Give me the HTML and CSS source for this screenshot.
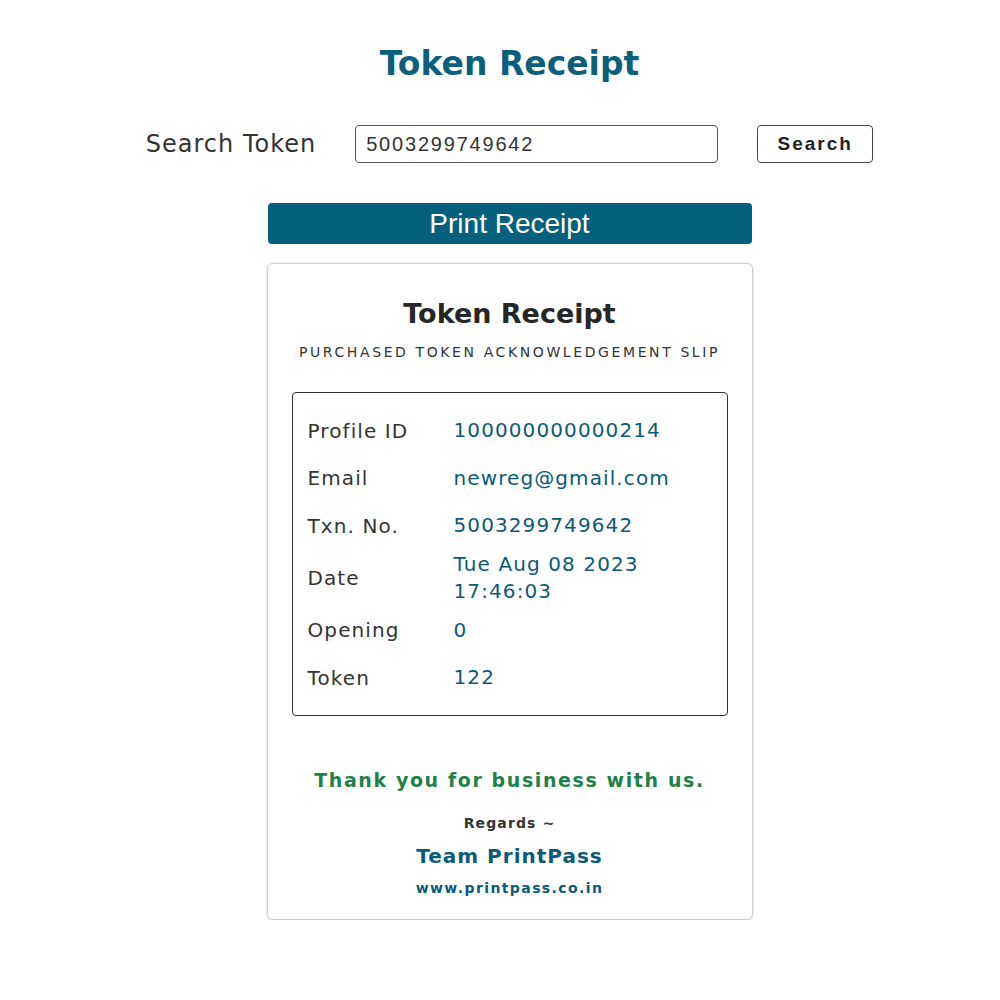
FILE: index.html
```html
<!DOCTYPE html>
<html>
<head>
<meta charset="utf-8">
<link rel="stylesheet" href="styles.css">
</head>
<body>
<div class="page">
  <h1 class="page-title">Token Receipt</h1>
  <div class="search-row">
    <label class="search-label" for="tok">Search Token</label>
    <input id="tok" class="search-input" type="text" value="5003299749642">
    <button class="search-btn">Search</button>
  </div>
  <button class="print-btn">Print Receipt</button>
  <div class="card">
    <h2 class="card-title">Token Receipt</h2>
    <p class="card-sub">PURCHASED TOKEN ACKNOWLEDGEMENT SLIP</p>
    <div class="details">
      <div class="row"><span class="lbl">Profile ID</span><span class="val">100000000000214</span></div>
      <div class="row"><span class="lbl">Email</span><span class="val">newreg@gmail.com</span></div>
      <div class="row"><span class="lbl">Txn. No.</span><span class="val">5003299749642</span></div>
      <div class="row row-tall"><span class="lbl">Date</span><span class="val">Tue Aug 08 2023<br>17:46:03</span></div>
      <div class="row"><span class="lbl">Opening</span><span class="val">0</span></div>
      <div class="row"><span class="lbl">Token</span><span class="val">122</span></div>
    </div>
    <p class="thanks">Thank you for business with us.</p>
    <p class="regards">Regards ~</p>
    <p class="team">Team PrintPass</p>
    <p class="site">www.printpass.co.in</p>
  </div>
</div>
</body>
</html>
```

FILE: styles.css
```css
html, body {
  margin: 0;
  padding: 0;
  background: #fff;
}
body {
  font-family: "DejaVu Sans", "Open Sans", sans-serif;
  color: #333;
}
.page {
  margin-left: 19px;
  display: flex;
  flex-direction: column;
  align-items: center;
}
.page-title {
  margin: 44px 0 0;
  font-size: 33px;
  line-height: 40px;
  font-weight: 700;
  color: #0a5f7c;
}
.search-row {
  margin-top: 41px;
  display: flex;
  align-items: center;
  height: 38px;
}
.search-label {
  font-size: 24px;
  letter-spacing: 1px;
  color: #333;
  margin-right: 39px;
}
.search-input {
  box-sizing: border-box;
  width: 363px;
  height: 38px;
  border: 1px solid #555;
  border-radius: 4px;
  padding: 0 10px;
  font-family: "Liberation Sans", Arial, sans-serif;
  font-size: 20px;
  letter-spacing: 1.8px;
  color: #333;
  outline: none;
}
.search-btn {
  box-sizing: border-box;
  margin-left: 39px;
  width: 116px;
  height: 38px;
  background: #fff;
  border: 1px solid #444;
  border-radius: 4px;
  font-family: "Liberation Sans", Arial, sans-serif;
  font-weight: 700;
  font-size: 19px;
  letter-spacing: 2px;
  color: #222;
}
.print-btn {
  margin-top: 40px;
  width: 484px;
  height: 41px;
  background: #04607c;
  border: none;
  border-radius: 4px;
  color: #fff;
  font-family: "Liberation Sans", Arial, sans-serif;
  font-size: 28px;
  line-height: 41px;
  padding: 0;
}
.card {
  box-sizing: border-box;
  margin-top: 19px;
  width: 486px;
  height: 657px;
  border: 1px solid #ccc;
  border-radius: 6px;
  box-shadow: 0 1px 3px rgba(0,0,0,0.18);
  padding: 32px 24px 0;
  display: flex;
  flex-direction: column;
  align-items: center;
}
.card-title {
  margin: 0;
  font-size: 27px;
  line-height: 36px;
  font-weight: 700;
  color: #262626;
}
.card-sub {
  margin: 11px 0 0;
  font-size: 14px;
  line-height: 18px;
  letter-spacing: 2.6px;
  color: #333;
  white-space: nowrap;
}
.details {
  box-sizing: border-box;
  margin-top: 31px;
  width: 436px;
  border: 1px solid #333;
  border-radius: 4px;
  padding: 14px 15px 13px;
}
.row {
  display: flex;
  align-items: center;
  min-height: 47.5px;
  font-size: 20px;
  letter-spacing: 1.1px;
}
.row-tall {
  min-height: 57px;
}
.lbl {
  width: 146px;
  flex: none;
  color: #333;
}
.val {
  color: #0a5a78;
  line-height: 27px;
}
.thanks {
  margin: 50px 0 0;
  font-size: 19px;
  line-height: 28px;
  font-weight: 700;
  letter-spacing: 1.6px;
  color: #1e8149;
}
.regards {
  margin: 20px 0 0;
  font-size: 14px;
  line-height: 18px;
  font-weight: 700;
  letter-spacing: 1.1px;
  color: #333;
}
.team {
  margin: 11px 0 0;
  font-size: 20px;
  line-height: 26px;
  font-weight: 700;
  letter-spacing: 1px;
  color: #0a5a78;
}
.site {
  margin: 10px 0 0;
  font-size: 14px;
  line-height: 18px;
  font-weight: 700;
  letter-spacing: 1.4px;
  color: #0a5a78;
}
```
